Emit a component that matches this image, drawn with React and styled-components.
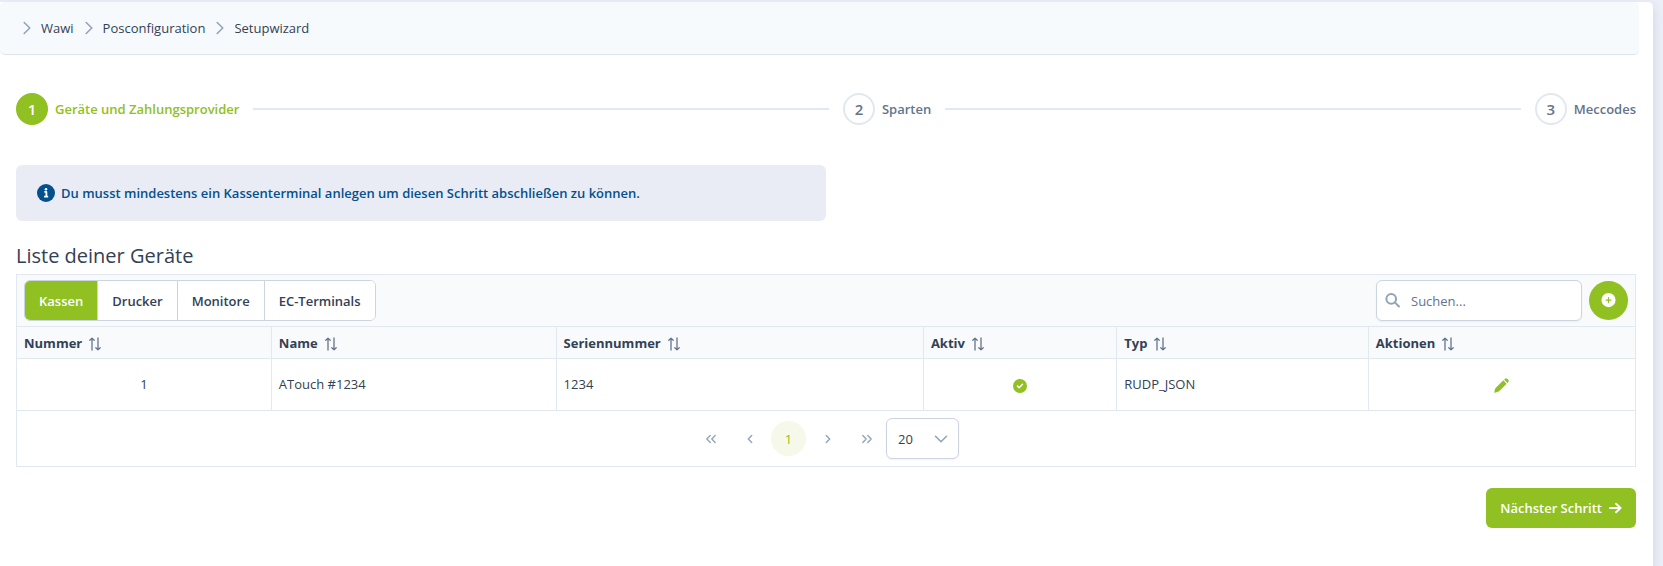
import React from "react";
import styled, { createGlobalStyle, css } from "styled-components";

const green = "#90c022";
const line = "#e2e8f0";
const control = "#cbd5e1";
const ink = "#334155";
const muted = "#64748b";
const faint = "#94a3b8";

const GlobalStyle = createGlobalStyle`
  *, *::before, *::after { box-sizing: border-box; }
  body {
    margin: 0;
    background: #ebeff8;
    color: ${ink};
    font: 400 13px/20px "Open Sans", "Noto Sans", sans-serif;
  }
  button, input, select { font: inherit; color: inherit; margin: 0; }
  button { cursor: pointer; }
`;

const Page = styled.div`
  min-height: 100vh;
  padding: 2px 10px 0 0;
  display: flex;
  overflow: hidden;
`;

const Panel = styled.div`
  flex: 1;
  min-width: 0;
  background: #fff;
  border-radius: 0 5px 0 0;
  box-shadow: 0 4px 12px rgba(30, 50, 80, 0.14);
`;

const Breadcrumb = styled.nav`
  margin-right: 14px;
  background: #f6fafd;
  border-bottom: 1px solid #dde5ec;
  border-radius: 5px;
  padding: 16px 20px;
`;

const Crumbs = styled.ol`
  list-style: none;
  margin: 0;
  padding: 0;
  display: flex;
  gap: 8px;
`;

const Crumb = styled.li`
  display: flex;
  align-items: center;
  gap: 7px;
  color: ${faint};
`;

const CrumbLink = styled.a`
  color: ${ink};
  text-decoration: none;
`;

const Content = styled.main`
  padding: 38px 17px 38px 16px;
`;

const Stepper = styled.ol`
  list-style: none;
  margin: 0 0 40px;
  padding: 0;
  display: flex;
  align-items: center;
  gap: 14px;
`;

const Step = styled.li`
  display: flex;
  align-items: center;
  gap: 14px;
  flex: ${(p) => (p.$last ? "0 0 auto" : "1 1 auto")};
  &:not(:last-child)::after {
    content: "";
    flex: 1;
    height: 2px;
    background: ${line};
  }
`;

const StepButton = styled.button`
  display: flex;
  align-items: center;
  gap: 7px;
  padding: 0;
  border: 0;
  background: none;
  font-weight: 600;
  color: ${(p) => (p.$active ? green : muted)};
  white-space: nowrap;
`;

const StepNumber = styled.span`
  width: 32px;
  height: 32px;
  border-radius: 50%;
  border: 2px solid ${(p) => (p.$active ? green : line)};
  background: ${(p) => (p.$active ? green : "#fff")};
  color: ${(p) => (p.$active ? "#fff" : muted)};
  font-size: 15px;
  line-height: 28px;
  text-align: center;
`;

const Notice = styled.div`
  width: 50%;
  display: flex;
  align-items: center;
  gap: 6px;
  padding: 18px 21px;
  margin-bottom: 23px;
  border-radius: 6px;
  background: #e9ecf5;
  color: #04508f;
  font-weight: 600;
`;

const Title = styled.h2`
  margin: 0 0 6px;
  font-size: 20px;
  line-height: 24px;
  font-weight: 500;
`;

const Card = styled.section`
  border: 1px solid ${line};
`;

const Toolbar = styled.div`
  display: flex;
  align-items: center;
  justify-content: space-between;
  padding: 5px 7px;
  background: #f8fafc;
  border-bottom: 1px solid ${line};
`;

const Segments = styled.div`
  display: flex;
  height: 41px;
  border: 1px solid ${control};
  border-radius: 6px;
  background: #fff;
  overflow: hidden;
`;

const Segment = styled.button`
  padding: 0 14px;
  border: 0;
  background: ${(p) => (p.$active ? green : "#fff")};
  color: ${(p) => (p.$active ? "#fff" : ink)};
  font-weight: 600;
  & + & { border-left: 1px solid ${control}; }
`;

const Tools = styled.div`
  display: flex;
  align-items: center;
  gap: 7px;
`;

const SearchBox = styled.label`
  display: flex;
  align-items: center;
  gap: 11px;
  width: 206px;
  height: 41px;
  padding: 0 10px 0 8px;
  border: 1px solid ${control};
  border-radius: 6px;
  background: #fff;
  box-shadow: 0 1px 2px rgba(18, 18, 23, 0.05);
  color: ${faint};
`;

const SearchInput = styled.input`
  flex: 1;
  min-width: 0;
  border: 0;
  padding: 0;
  outline: 0;
  background: none;
  color: ${ink};
  &::placeholder { color: ${muted}; opacity: 1; }
`;

const AddButton = styled.button`
  width: 39px;
  height: 39px;
  padding: 0;
  display: grid;
  place-items: center;
  border: 0;
  border-radius: 50%;
  background: ${green};
  color: #fff;
`;

const Table = styled.table`
  width: 100%;
  table-layout: fixed;
  border-collapse: separate;
  border-spacing: 0;
`;

const cell = css`
  border-bottom: 1px solid ${line};
  &:not(:last-child) { border-right: 1px solid ${line}; }
`;

const Th = styled.th`
  ${cell}
  height: 32px;
  padding: 0 7px;
  background: #f8fafc;
  text-align: left;
`;

const Td = styled.td`
  ${cell}
  height: 52px;
  padding: 0 7px 1px;
  text-align: ${(p) => (p.$center ? "center" : "left")};
`;

const SortButton = styled.button`
  display: flex;
  align-items: center;
  gap: 6px;
  padding: 0;
  border: 0;
  background: none;
  font-weight: 700;
  svg { color: ${muted}; margin-top: 3px; }
`;

const IconButton = styled.button`
  display: inline-flex;
  padding: 0;
  border: 0;
  background: none;
  color: ${green};
  vertical-align: middle;
`;

const Paginator = styled.div`
  display: flex;
  align-items: center;
  justify-content: center;
  gap: 2px;
  padding: 7px;
`;

const Pages = styled.div`
  display: flex;
  gap: 4px;
`;

const PageButton = styled.button`
  width: 35px;
  height: 35px;
  padding: 0;
  display: grid;
  place-items: center;
  border: 0;
  border-radius: 50%;
  background: ${(p) => (p.$active ? "#f6f8ea" : "none")};
  color: ${(p) => (p.$active ? green : faint)};
`;

const SelectBox = styled.div`
  display: grid;
  align-items: center;
  width: 73px;
  height: 41px;
  color: ${faint};
  > * { grid-area: 1 / 1; }
  svg { justify-self: end; margin-right: 11px; pointer-events: none; }
`;

const Select = styled.select`
  appearance: none;
  width: 100%;
  height: 100%;
  padding: 0 32px 0 11px;
  border: 1px solid ${control};
  border-radius: 6px;
  background: #fff;
  color: ${ink};
  box-shadow: 0 1px 2px rgba(18, 18, 23, 0.05);
`;

const Footer = styled.div`
  display: flex;
  justify-content: flex-end;
  margin-top: 21px;
`;

const NextButton = styled.button`
  display: flex;
  align-items: center;
  gap: 6px;
  height: 40px;
  padding: 0 14px;
  border: 0;
  border-radius: 6px;
  background: ${green};
  color: #fff;
  font-weight: 600;
`;

function Icon({ size = 14, width = 1, children }) {
  return (
    <svg width={size} height={size} viewBox="0 0 14 14" fill="none" stroke="currentColor"
      strokeWidth={width} strokeLinecap="round" strokeLinejoin="round" aria-hidden="true">
      {children}
    </svg>
  );
}

const ChevronIcon = () => <Icon width={1.6}><path d="M4.2 1.5 9.8 7 4.2 12.5" /></Icon>;
const ChevronDownIcon = () => <Icon width={1.6}><path d="M1.5 4.3 7 9.7 12.5 4.3" /></Icon>;
const SortIcon = () => (
  <Icon width={1.3}>
    <path d="M4 13V1.2M1.8 3.2 4 1.1 6.2 3.2M10 1v11.8M7.8 10.8 10 12.9l2.2-2.1" />
  </Icon>
);
const InfoIcon = () => (
  <Icon size={18}>
    <circle cx="7" cy="7" r="7" fill="currentColor" stroke="none" />
    <path d="M5.7 6.2H7.3V9.8M5.5 9.8h3.2" stroke="#fff" strokeWidth="1.4" strokeLinecap="butt" />
    <circle cx="7" cy="4.1" r="1" fill="#fff" stroke="none" />
  </Icon>
);
const SearchIcon = () => (
  <Icon size={15} width={1.9}>
    <circle cx="5.8" cy="5.5" r="4.5" />
    <path d="m9.4 9 3.6 3.6" />
  </Icon>
);
const PlusCircleIcon = () => (
  <Icon size={15}>
    <circle cx="7" cy="6.6" r="6.6" fill="currentColor" stroke="none" />
    <path d="M7 4.3v4.6M4.7 6.6h4.6" stroke={green} strokeWidth="1.1" />
  </Icon>
);
const CheckCircleIcon = () => (
  <Icon size={14}>
    <circle cx="7" cy="7" r="7" fill="currentColor" stroke="none" />
    <path d="M4.5 7.1 6.2 8.7l3.3-3.4" stroke="#fff" strokeWidth="1.5" />
  </Icon>
);
const PencilIcon = () => (
  <Icon size={15}>
    <path fill="currentColor" stroke="none"
      d="M8.7 2.2 11.8 5.3 5 12.1Q3.8 13.3.6 13.7Q.1 13.8.3 13.2Q.7 10.2 1.7 9.2ZM9.4 1.5 10.3.6Q11.3-.2 12.3.6L13.4 1.7Q14.2 2.7 13.4 3.7L12.5 4.6Z" />
  </Icon>
);
const ArrowIcon = () => <Icon width={1.9}><path d="M2 7h10.4M8 2.8 12.6 7 8 11.2" /></Icon>;

const pageIcons = {
  first: "M6.2 3.6 2.8 7l3.4 3.4M11.2 3.6 7.8 7l3.4 3.4",
  prev: "M8.7 3.6 5.3 7l3.4 3.4",
  next: "M5.3 3.6 8.7 7l-3.4 3.4",
  last: "M2.8 3.6 6.2 7l-3.4 3.4M7.8 3.6 11.2 7l-3.4 3.4",
};
const PageIcon = ({ name }) => <Icon width={1.4}><path d={pageIcons[name]} /></Icon>;

const crumbs = ["Wawi", "Posconfiguration", "Setupwizard"];
const steps = ["Geräte und Zahlungsprovider", "Sparten", "Meccodes"];
const segments = ["Kassen", "Drucker", "Monitore", "EC-Terminals"];
const columns = [
  { name: "Nummer", width: "15.75%" },
  { name: "Name", width: "17.6%" },
  { name: "Seriennummer", width: "22.7%" },
  { name: "Aktiv", width: "11.95%" },
  { name: "Typ", width: "15.55%" },
  { name: "Aktionen", width: "16.45%" },
];

export default function App() {
  return (
    <Page>
      <GlobalStyle />
      <Panel>
        <Breadcrumb aria-label="Breadcrumb">
          <Crumbs>
            {crumbs.map((name) => (
              <Crumb key={name}>
                <ChevronIcon />
                <CrumbLink href="#">{name}</CrumbLink>
              </Crumb>
            ))}
          </Crumbs>
        </Breadcrumb>
        <Content>
          <Stepper>
            {steps.map((name, i) => (
              <Step key={name} $last={i === steps.length - 1}>
                <StepButton type="button" $active={i === 0}>
                  <StepNumber $active={i === 0}>{i + 1}</StepNumber>
                  {name}
                </StepButton>
              </Step>
            ))}
          </Stepper>
          <Notice role="status">
            <InfoIcon />
            Du musst mindestens ein Kassenterminal anlegen um diesen Schritt abschließen zu können.
          </Notice>
          <Title>Liste deiner Geräte</Title>
          <Card>
            <Toolbar>
              <Segments role="group" aria-label="Geräteart">
                {segments.map((name, i) => (
                  <Segment key={name} type="button" $active={i === 0} aria-pressed={i === 0}>
                    {name}
                  </Segment>
                ))}
              </Segments>
              <Tools>
                <SearchBox>
                  <SearchIcon />
                  <SearchInput type="text" placeholder="Suchen..." aria-label="Suchen" />
                </SearchBox>
                <AddButton type="button" aria-label="Hinzufügen"><PlusCircleIcon /></AddButton>
              </Tools>
            </Toolbar>
            <Table>
              <colgroup>
                {columns.map((c) => <col key={c.name} width={c.width} />)}
              </colgroup>
              <thead>
                <tr>
                  {columns.map((c) => (
                    <Th key={c.name} scope="col">
                      <SortButton type="button">{c.name}<SortIcon /></SortButton>
                    </Th>
                  ))}
                </tr>
              </thead>
              <tbody>
                <tr>
                  <Td $center>1</Td>
                  <Td>ATouch #1234</Td>
                  <Td>1234</Td>
                  <Td $center>
                    <IconButton type="button" aria-label="Aktiv"><CheckCircleIcon /></IconButton>
                  </Td>
                  <Td>RUDP_JSON</Td>
                  <Td $center>
                    <IconButton type="button" aria-label="Bearbeiten"><PencilIcon /></IconButton>
                  </Td>
                </tr>
              </tbody>
            </Table>
            <Paginator>
              <Pages>
                <PageButton type="button" aria-label="Erste Seite"><PageIcon name="first" /></PageButton>
                <PageButton type="button" aria-label="Vorherige Seite"><PageIcon name="prev" /></PageButton>
                <PageButton type="button" $active aria-current="page">1</PageButton>
                <PageButton type="button" aria-label="Nächste Seite"><PageIcon name="next" /></PageButton>
                <PageButton type="button" aria-label="Letzte Seite"><PageIcon name="last" /></PageButton>
              </Pages>
              <SelectBox>
                <Select aria-label="Zeilen pro Seite" defaultValue="20">
                  <option>10</option>
                  <option>20</option>
                  <option>50</option>
                </Select>
                <ChevronDownIcon />
              </SelectBox>
            </Paginator>
          </Card>
          <Footer>
            <NextButton type="button">Nächster Schritt<ArrowIcon /></NextButton>
          </Footer>
        </Content>
      </Panel>
    </Page>
  );
}
